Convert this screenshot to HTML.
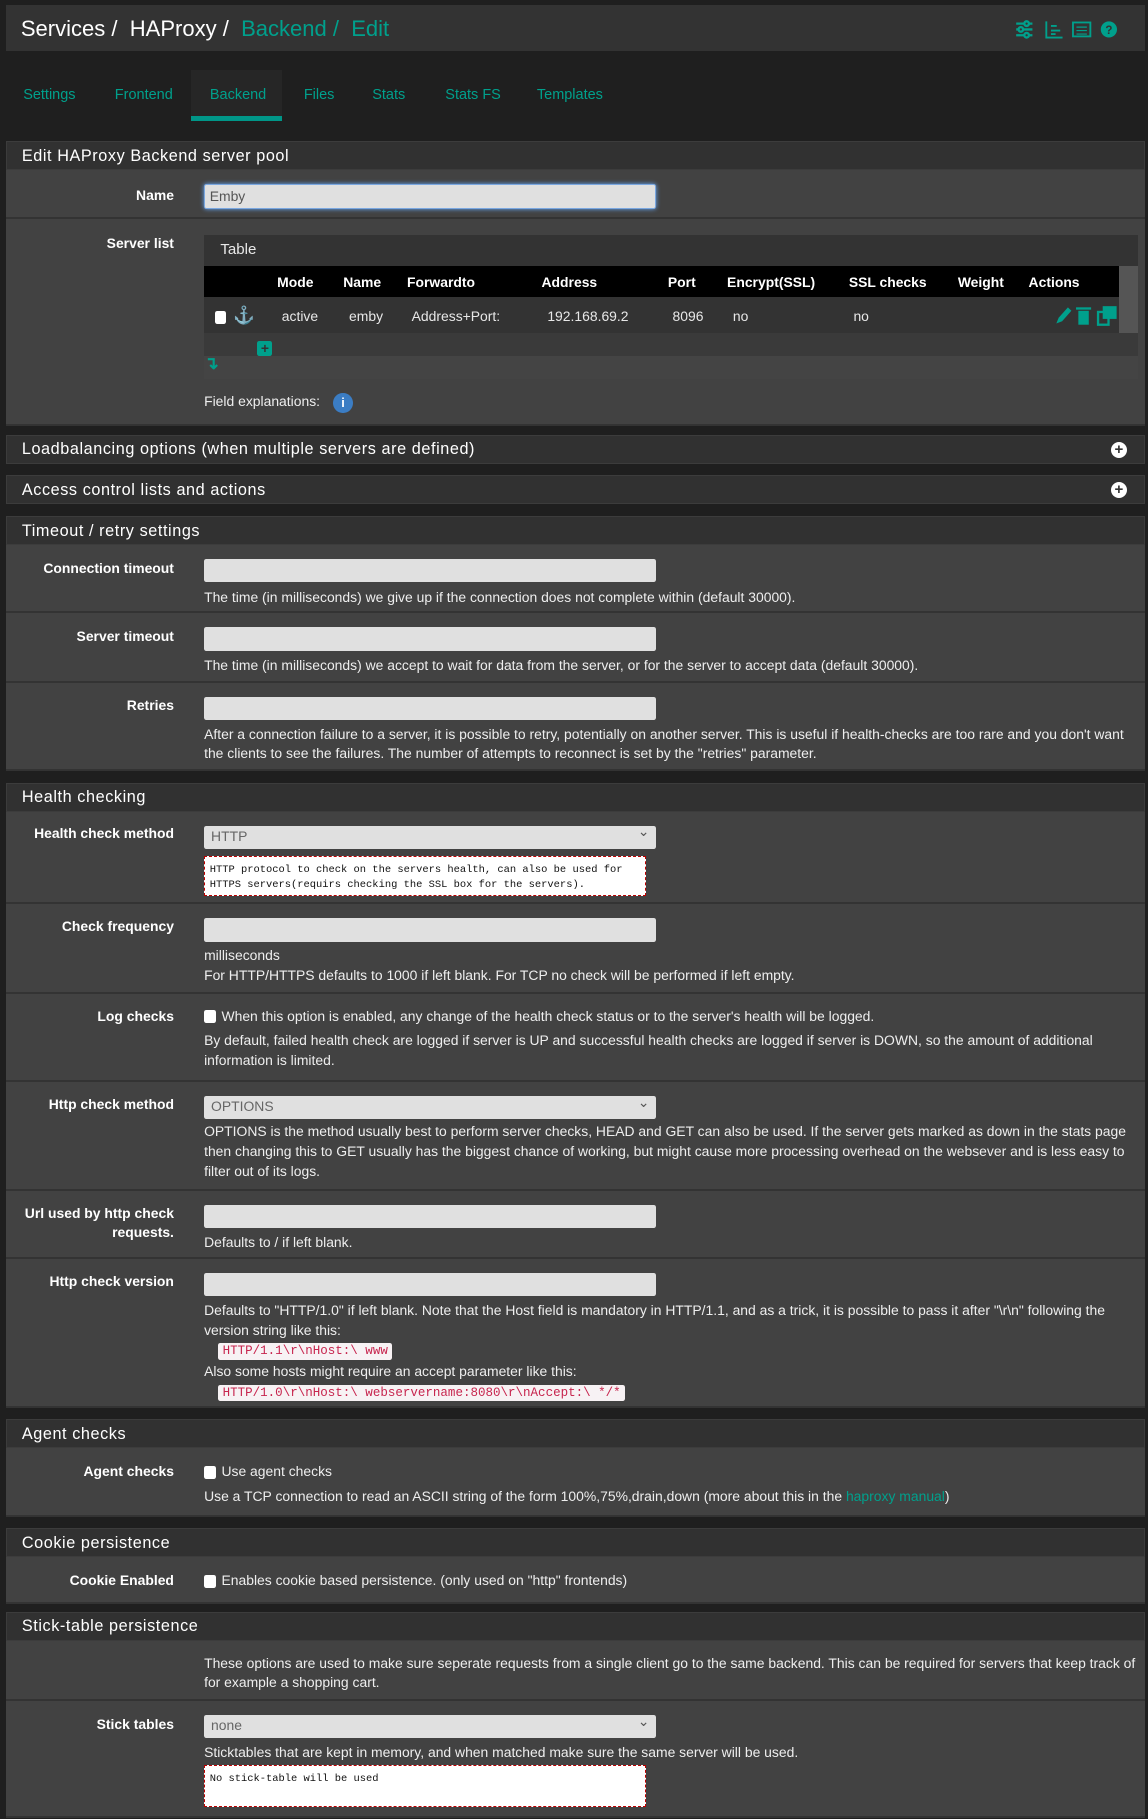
<!DOCTYPE html>
<html><head><meta charset="utf-8"><style>
html,body{margin:0;padding:0;background:#1f1f1f;width:1148px;height:1819px;overflow:hidden}
#w{zoom:1.1596;width:990px;height:1569px;position:relative;font-family:"Liberation Sans",sans-serif;color:#e8e8e8;font-size:12px}
.a{position:absolute}
.top{left:5px;top:4px;width:982px;height:40px;background:#333}
.top .t{position:absolute;left:13px;top:10px;font-size:19px;color:#fff}
.teal{color:#00a08c}
.tabs span{position:absolute;top:75px;font-size:12.5px;color:#00a08c}
.ph{left:5px;width:982px;height:25px;background:#313131;border:1px solid #3c3c3c;box-sizing:border-box;font-size:14px;color:#fff;letter-spacing:.5px;padding:4px 0 0 13px}
.row{left:5px;width:982px;background:#424242;border-bottom:2px solid #333;box-sizing:border-box}
.lb{position:absolute;right:837px;font-weight:bold;color:#fff;text-align:right;font-size:12px;line-height:17px}
.inp{position:absolute;left:171px;width:390px;height:20px;background:#e0e0e0;border-radius:2px}
.sel{font-size:12px;color:#666;padding:2px 6px;box-sizing:border-box}
.sel:after{content:"⌄";position:absolute;right:6px;top:-2px;color:#555}
.hl{position:absolute;left:171px;right:8px;line-height:17px;color:#eee}
.ta{position:absolute;left:171px;width:381px;background:#fff;border:1px dashed #b00;box-sizing:border-box;font-family:"Liberation Mono",monospace;font-size:9px;color:#111;padding:5px 4px;line-height:13px}
.cb{display:inline-block;width:10px;height:11px;background:#fff;border-radius:2px;vertical-align:-2px;margin-right:5px}
code{background:#f7f2f4;color:#c7254e;font-family:"Liberation Mono",monospace;font-size:10.8px;padding:1px 4px;border-radius:2px;margin-left:12px}
.plus{position:absolute;right:14px;top:5px;width:14px;height:14px;border-radius:50%;background:#fff;color:#333;font-weight:bold;font-size:13px;line-height:14px;text-align:center}
</style></head><body><div id="w">
<div class="a top"><div class="t">Services / &nbsp;HAProxy / &nbsp;<span class="teal">Backend / &nbsp;Edit</span></div>
<svg class="a" style="left:870px;top:12px" width="90" height="18" viewBox="0 0 90 18"><g stroke="#00a08c" stroke-width="2" fill="none"><path d="M1 4h14M1 9h14M1 14h14"/><circle cx="10" cy="4" r="2" fill="#333"/><circle cx="5" cy="9" r="2" fill="#333"/><circle cx="10" cy="14" r="2" fill="#333"/><path d="M27 2v14h14M31 6h5M31 10h8M31 13h4" stroke-width="1.6"/><rect x="50" y="3" width="15" height="12" stroke-width="1.6"/><path d="M53 7h9M53 10h9M53 13h9" stroke-width="1"/></g><circle cx="81" cy="9" r="7" fill="#00a08c"/><text x="78" y="13" font-size="10" fill="#333" font-weight="bold" font-family="Liberation Sans">?</text></svg>
</div>
<div class="tabs"><div class="a" style="left:165px;top:60px;width:78px;height:44px;background:#262626"></div><div class="a" style="left:165px;top:100px;width:78px;height:4px;background:#009688"></div>
<span style="left:20px">Settings</span><span style="left:99px">Frontend</span><span style="left:181px">Backend</span><span style="left:262px">Files</span><span style="left:321px">Stats</span><span style="left:384px">Stats FS</span><span style="left:463px">Templates</span></div>

<div class="a ph" style="top:122px">Edit HAProxy Backend server pool</div>
<div class="a row" style="top:147px;height:42px"><div class="lb" style="top:13px">Name</div><div class="inp" style="top:12px;height:21px;border:1px solid #7aa7e0;box-shadow:0 0 4px #6af;box-sizing:border-box;color:#555;padding:2px 4px">Emby</div></div>
<div class="a row" style="top:189px;height:178px"><div class="lb" style="top:13px">Server list</div>
<div class="a" style="left:171px;top:14px;width:805px;height:124px;background:#3a3a3a">
<div style="height:26px;background:#333;padding:5px 0 0 14px;box-sizing:border-box;font-size:13px">Table</div>
<div class="a" style="left:0;top:26px;width:789px;height:27px;background:#000;font-weight:bold;color:#fff">
<span class="a" style="left:63px;top:7px">Mode</span><span class="a" style="left:120px;top:7px">Name</span><span class="a" style="left:175px;top:7px">Forwardto</span><span class="a" style="left:291px;top:7px">Address</span><span class="a" style="left:400px;top:7px">Port</span><span class="a" style="left:451px;top:7px">Encrypt(SSL)</span><span class="a" style="left:556px;top:7px">SSL checks</span><span class="a" style="left:650px;top:7px">Weight</span><span class="a" style="left:711px;top:7px">Actions</span></div>
<div class="a" style="left:789px;top:26px;width:16px;height:58px;background:#555"></div>
<div class="a" style="left:0;top:53px;width:789px;height:31px;background:#333"><span class="cb a" style="left:9px;top:12px"></span><span class="a teal" style="left:25px;top:7px;font-size:15px">⚓</span>
<span class="a" style="left:67px;top:10px">active</span><span class="a" style="left:125px;top:10px">emby</span><span class="a" style="left:179px;top:10px">Address+Port:</span><span class="a" style="left:296px;top:10px">192.168.69.2</span><span class="a" style="left:404px;top:10px">8096</span><span class="a" style="left:456px;top:10px">no</span><span class="a" style="left:560px;top:10px">no</span>
<svg class="a" style="left:733px;top:7px" width="55" height="18"><path d="M2 16l2-5 8-9 3 3-8 9z" fill="#00a08c"/><rect x="21" y="5" width="9" height="12" fill="#00a08c"/><rect x="19" y="2" width="13" height="2" fill="#00a08c"/><rect x="38" y="6" width="9" height="11" fill="none" stroke="#00a08c" stroke-width="2"/><rect x="42" y="1" width="12" height="11" fill="#00a08c"/></svg></div>
<div class="a" style="left:46px;top:91px;width:13px;height:13px;background:#00a08c;border-radius:2px;color:#333;font-weight:bold;text-align:center;line-height:13px">+</div>
<div class="a" style="left:0;top:104px;width:805px;height:20px;background:#444"></div>
<span class="a teal" style="left:0;top:101px;font-size:15px;font-weight:bold">↴</span></div>
<div class="hl" style="top:149px">Field explanations: <span style="display:inline-block;width:17px;height:17px;border-radius:50%;background:#3b7dc4;color:#fff;text-align:center;font-size:11px;font-weight:bold;margin-left:8px;vertical-align:-1px">i</span></div></div>

<div class="a ph" style="top:375px">Loadbalancing options (when multiple servers are defined)<div class="plus">+</div></div>
<div class="a ph" style="top:410px">Access control lists and actions<div class="plus">+</div></div>

<div class="a ph" style="top:445px">Timeout / retry settings</div>
<div class="a row" style="top:470px;height:59px"><div class="lb" style="top:12px">Connection timeout</div><div class="inp" style="top:12px"></div><div class="hl" style="top:37px">The time (in milliseconds) we give up if the connection does not complete within (default 30000).</div></div>
<div class="a row" style="top:529px;height:60px"><div class="lb" style="top:12px">Server timeout</div><div class="inp" style="top:12px"></div><div class="hl" style="top:37px">The time (in milliseconds) we accept to wait for data from the server, or for the server to accept data (default 30000).</div></div>
<div class="a row" style="top:589px;height:76px"><div class="lb" style="top:11px">Retries</div><div class="inp" style="top:12px"></div><div class="hl" style="top:36px">After a connection failure to a server, it is possible to retry, potentially on another server. This is useful if health-checks are too rare and you don't want the clients to see the failures. The number of attempts to reconnect is set by the "retries" parameter.</div></div>

<div class="a ph" style="top:675px">Health checking</div>
<div class="a row" style="top:700px;height:80px"><div class="lb" style="top:11px">Health check method</div><div class="inp sel" style="top:12px">HTTP</div><div class="ta" style="top:38px;height:35px">HTTP protocol to check on the servers health, can also be used for HTTPS servers(requirs checking the SSL box for the servers).</div></div>
<div class="a row" style="top:780px;height:77px"><div class="lb" style="top:11px">Check frequency</div><div class="inp" style="top:12px"></div><div class="hl" style="top:36px">milliseconds<br>For HTTP/HTTPS defaults to 1000 if left blank. For TCP no check will be performed if left empty.</div></div>
<div class="a row" style="top:857px;height:76px"><div class="lb" style="top:11px">Log checks</div><div class="hl" style="top:11px"><span class="cb"></span>When this option is enabled, any change of the health check status or to the server's health will be logged.</div><div class="hl" style="top:32px">By default, failed health check are logged if server is UP and successful health checks are logged if server is DOWN, so the amount of additional information is limited.</div></div>
<div class="a row" style="top:933px;height:94px"><div class="lb" style="top:11px">Http check method</div><div class="inp sel" style="top:12px">OPTIONS</div><div class="hl" style="top:35px">OPTIONS is the method usually best to perform server checks, HEAD and GET can also be used. If the server gets marked as down in the stats page then changing this to GET usually has the biggest chance of working, but might cause more processing overhead on the websever and is less easy to filter out of its logs.</div></div>
<div class="a row" style="top:1027px;height:59px"><div class="lb" style="top:11px">Url used by http check<br>requests.</div><div class="inp" style="top:12px"></div><div class="hl" style="top:36px">Defaults to / if left blank.</div></div>
<div class="a row" style="top:1086px;height:128px"><div class="lb" style="top:11px">Http check version</div><div class="inp" style="top:12px"></div><div class="hl" style="top:36px">Defaults to "HTTP/1.0" if left blank. Note that the Host field is mandatory in HTTP/1.1, and as a trick, it is possible to pass it after "\r\n" following the version string like this:<br><code>HTTP/1.1\r\nHost:\ www</code><br>Also some hosts might require an accept parameter like this:<br><code>HTTP/1.0\r\nHost:\ webservername:8080\r\nAccept:\ */*</code></div></div>

<div class="a ph" style="top:1224px">Agent checks</div>
<div class="a row" style="top:1249px;height:59px"><div class="lb" style="top:12px">Agent checks</div><div class="hl" style="top:12px"><span class="cb"></span>Use agent checks</div><div class="hl" style="top:33px">Use a TCP connection to read an ASCII string of the form 100%,75%,drain,down (more about this in the <span class="teal">haproxy manual</span>)</div></div>

<div class="a ph" style="top:1318px">Cookie persistence</div>
<div class="a row" style="top:1343px;height:40px"><div class="lb" style="top:12px">Cookie Enabled</div><div class="hl" style="top:12px"><span class="cb"></span>Enables cookie based persistence. (only used on "http" frontends)</div></div>

<div class="a ph" style="top:1390px">Stick-table persistence</div>
<div class="a row" style="top:1415px;height:52px"><div class="hl" style="top:11px;right:0">These options are used to make sure seperate requests from a single client go to the same backend. This can be required for servers that keep track of for example a shopping cart.</div></div>
<div class="a row" style="top:1467px;height:101px"><div class="lb" style="top:12px">Stick tables</div><div class="inp sel" style="top:12px">none</div><div class="hl" style="top:36px">Sticktables that are kept in memory, and when matched make sure the same server will be used.</div><div class="ta" style="top:55px;height:36px">No stick-table will be used</div></div>
</div></body></html>
